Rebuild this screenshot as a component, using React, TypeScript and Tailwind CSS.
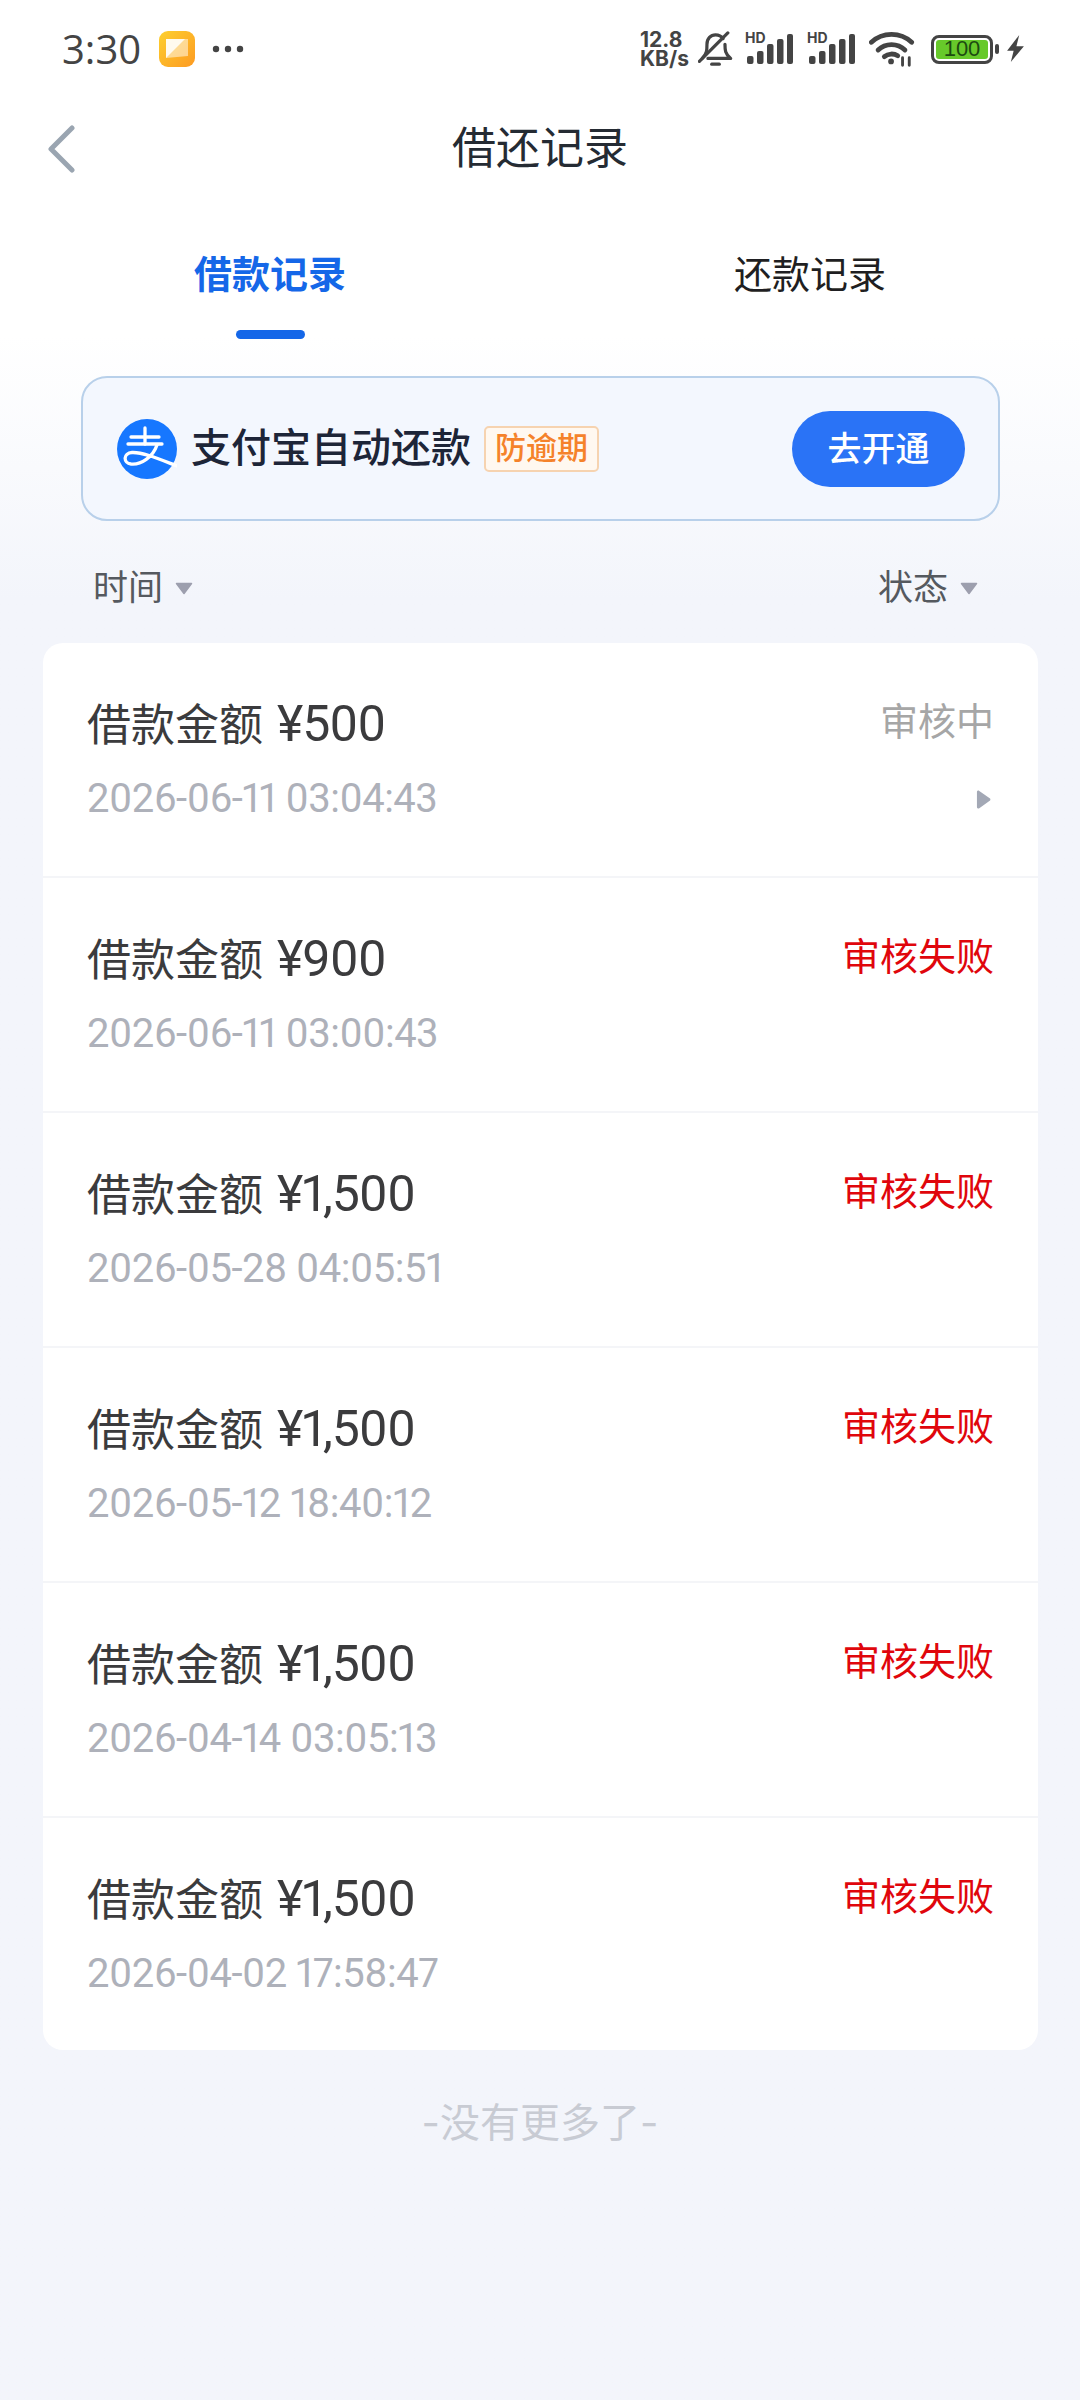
import React from "react";

const cjk = "font-['Roboto','Noto_Sans_CJK_SC',sans-serif]";

function Signal() {
  return (
    <div className="relative w-[48px] h-[34px]">
      <span className="absolute left-0 top-[-1px] text-[14px] leading-[14px] font-bold text-[#444] font-['Inter',sans-serif]">HD</span>
      <svg className="absolute left-0 top-0" width="48" height="34" viewBox="0 0 48 34" fill="#444">
        <rect x="2" y="24" width="6.500" height="8" rx="2" />
        <rect x="12" y="19" width="6.500" height="13" rx="2" />
        <rect x="22" y="12" width="6.500" height="20" rx="2" />
        <rect x="32" y="7" width="6.500" height="25" rx="2" />
        <rect x="42" y="2" width="6" height="30" rx="2" />
      </svg>
    </div>
  );
}

function StatusBar() {
  return (
    <div className="h-[96px] flex items-center justify-between pl-[62px] pr-[55px] pt-[2px]">
      <div className="flex items-center">
        <span className="text-[40px] leading-none text-[#444] font-['Open_Sans',sans-serif]">3:30</span>
        <svg className="ml-[18px]" width="36" height="36" viewBox="0 0 36 36">
          <defs>
            <linearGradient id="appg" x1="0" y1="0" x2="1" y2="1">
              <stop offset="0" stopColor="#fdd02e" />
              <stop offset="1" stopColor="#fd9a22" />
            </linearGradient>
          </defs>
          <rect width="36" height="36" rx="9" fill="url(#appg)" />
          <path d="M7 27 L7 8 L29 8 L29 25 L7 27Z" fill="#fff" opacity="0.5" />
          <path d="M7 27 L7 8 L26 8 Z" fill="#fff" opacity="0.85" />
        </svg>
        <svg className="ml-[17px]" width="32" height="8" viewBox="0 0 32 8" fill="#444">
          <circle cx="4" cy="4" r="3.200" />
          <circle cx="16" cy="4" r="3.200" />
          <circle cx="28" cy="4" r="3.200" />
        </svg>
      </div>
      <div className="flex items-center">
        <div className="w-[47px] flex flex-col items-start text-[#444] font-['Inter',sans-serif] font-bold text-[21px] leading-[19px]">
          <span>12.8</span>
          <span>KB/s</span>
        </div>
        <svg className="ml-[11px]" width="35" height="36" viewBox="0 0 36 38" fill="none" stroke="#444" strokeWidth="3.400" strokeLinecap="round" strokeLinejoin="round">
          <path d="M4 29 C9 24 9 20 9 14 C9 8 13 4 18 4 C21 4 24 5 26 8" />
          <path d="M28 14 C28 20 28 24 34 29 L10 29" />
          <path d="M14 35 H22" />
          <path d="M1 32 L31 2" />
        </svg>
        <div className="ml-[12px]"><Signal /></div>
        <div className="ml-[14px]"><Signal /></div>
        <svg className="ml-[14px]" width="46" height="36" viewBox="0 0 48 36" fill="none" stroke="#444" strokeWidth="5" strokeLinecap="round">
          <path d="M2.500 11 C14 0 33 0 44.500 11" />
          <path d="M9.500 19 C17 11.500 30 11.500 37.500 19" />
          <path d="M16 26 C20 22.500 26 22.500 30 25" />
          <circle cx="23" cy="31" r="3" fill="#444" stroke="none" />
          <path d="M35 27 V35 M42 27 V35" strokeWidth="3" />
        </svg>
        <div className="ml-[16px] w-[62px] h-[29px] rounded-[8px] border-[3px] border-[#444] p-[2px]">
          <div className="h-full w-full rounded-[3px] bg-[#67c92a] flex items-center justify-center text-[22px] leading-none text-[#1c4a10] font-['Liberation_Sans',sans-serif]">100</div>
        </div>
        <div className="ml-[2px] w-[4px] h-[10px] rounded-[2px] bg-[#444]" />
        <svg className="ml-[7px]" width="19" height="28" viewBox="0 0 20 30" fill="#444">
          <path d="M14 0 L1 17 H8 L5 29 L19 12 H11 Z" />
        </svg>
      </div>
    </div>
  );
}

function Row({ amount, date, status, pending }: { amount: string; date: string; status: string; pending?: boolean }) {
  return (
    <div className="h-[235px] last:h-[232px] pl-[44px] pr-[44px] pt-[55px] border-b-[2px] border-[#f4f5f8] last:border-b-0 flex flex-col">
      <div className="flex items-center justify-between h-[50px]">
        <span className={`text-[44px] leading-[50px] pt-[3px] text-[#3b3b3d] ${cjk}`}>
          借款金额 <span className="ml-[3px] text-[50px] tracking-[-1px] proportional-nums">{amount}</span>
        </span>
        <span className={`text-[38px] leading-[50px] pb-[2px] ${pending ? "text-[#a6a6a6]" : "text-[#e0060c]"} ${cjk}`}>{status}</span>
      </div>
      <div className="flex items-center justify-between h-[50px] mt-[26px]">
        <span className={`text-[40px] leading-[50px] tracking-[-0.5px] proportional-nums text-[#aeb1ba] ${cjk}`}>{date}</span>
        {pending && (
          <svg className="mr-[3px]" width="15" height="19" viewBox="0 0 16 20" fill="#a3a8b5">
            <path d="M1 2 C1 0.500 2.500 0 3.500 0.800 L15 9 C15.500 9.500 15.500 10.500 15 11 L3.500 19.200 C2.500 20 1 19.500 1 18 Z" />
          </svg>
        )}
      </div>
    </div>
  );
}

function Caret() {
  return (
    <svg width="18" height="13" viewBox="0 0 18 13" fill="#9d9fae" stroke="#9d9fae" strokeWidth="1.500" strokeLinejoin="round">
      <path d="M1.500 1.500 H16.500 L9 11.500 Z" />
    </svg>
  );
}

const rows = [
  { amount: "¥500", date: "2026-06-11 03:04:43", status: "审核中", pending: true },
  { amount: "¥900", date: "2026-06-11 03:00:43", status: "审核失败" },
  { amount: "¥1,500", date: "2026-05-28 04:05:51", status: "审核失败" },
  { amount: "¥1,500", date: "2026-05-12 18:40:12", status: "审核失败" },
  { amount: "¥1,500", date: "2026-04-14 03:05:13", status: "审核失败" },
  { amount: "¥1,500", date: "2026-04-02 17:58:47", status: "审核失败" },
];

export default function App() {
  return (
    <div className={`w-[1080px] h-[2400px] overflow-hidden bg-gradient-to-b from-white from-[14%] to-[#f3f5fb] to-[25%] ${cjk}`}>
      <StatusBar />
      <div className="relative h-[104px] flex items-center justify-center pt-[2px]">
        <svg className="absolute left-[48px] top-[29px]" width="27" height="48" viewBox="0 0 27 48" fill="none" stroke="#9aa5b1" strokeWidth="5" strokeLinecap="round" strokeLinejoin="round">
          <path d="M24 3 L3 24 L24 45" />
        </svg>
        <span className="text-[44px] leading-none text-[#252b33]">借还记录</span>
      </div>
      <div className="h-[141px] flex">
        <div className="w-[540px] flex flex-col items-center pt-[50px]">
          <span className="text-[38px] leading-[50px] font-bold text-[#1567e8]">借款记录</span>
          <div className="mt-[30px] w-[69px] h-[9px] rounded-full bg-[#1567e8]" />
        </div>
        <div className="w-[540px] flex flex-col items-center pt-[50px]">
          <span className="text-[38px] leading-[50px] text-[#1f1f22]">还款记录</span>
        </div>
      </div>
      <div className="mt-[35px] ml-[81px] w-[919px] h-[145px] rounded-[26px] border-[2px] border-[#b8d0ea] bg-[#f3f7fe] flex items-center justify-between pl-[34px] pr-[33px]">
        <div className="flex items-center">
          <svg width="60" height="60" viewBox="0 0 60 60">
            <circle cx="30" cy="30" r="30" fill="#1677ff" />
            <g fill="none" stroke="#fff" strokeWidth="3.300" strokeLinecap="round" strokeLinejoin="round">
              <path d="M14 18 H42" />
              <path d="M28 9 V25" />
              <path d="M11 25 H45" />
              <path d="M40 26 C36 38 24 46 14 45 C6 44 6 34 15 33.500 C26 33 42 40 60 47" />
            </g>
          </svg>
          <span className="ml-[14px] text-[40px] leading-none font-medium text-[#1d2538]">支付宝自动还款</span>
          <span className="ml-[13px] h-[46px] px-[9px] rounded-[5px] border-[2px] border-[#f6d3b0] bg-[#fff8f0] flex items-center text-[31px] font-medium text-[#f5822a] leading-none">防逾期</span>
        </div>
        <div className="w-[173px] h-[76px] rounded-full bg-[#2a73f6] flex items-center justify-center text-[34px] leading-none font-medium text-white">去开通</div>
      </div>
      <div className="h-[122px] flex items-center justify-between pl-[93px] pr-[102px] pt-[12px]">
        <div className="flex items-center gap-[12px]">
          <span className="text-[35px] leading-none text-[#55595f]">时间</span>
          <Caret />
        </div>
        <div className="flex items-center gap-[12px]">
          <span className="text-[35px] leading-none text-[#55595f]">状态</span>
          <Caret />
        </div>
      </div>
      <div className="ml-[43px] w-[995px] rounded-[20px] bg-white overflow-hidden">
        {rows.map((r) => (
          <Row key={r.date} {...r} />
        ))}
      </div>
      <div className="mt-[48px] text-center text-[40px] leading-[50px] text-[#c8cbd3]">
        <span className="font-['Inter',sans-serif]">-</span>没有更多了<span className="font-['Inter',sans-serif]">-</span>
      </div>
    </div>
  );
}
